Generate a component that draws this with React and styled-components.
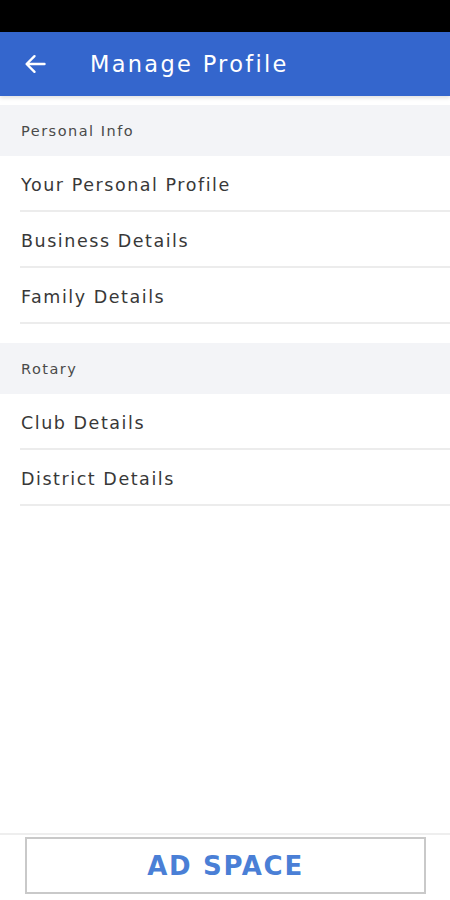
import React from "react";
import styled, { createGlobalStyle } from "styled-components";

const Global = createGlobalStyle`
  html, body { margin: 0; padding: 0; background: #fff; }
  body { font-family: "DejaVu Sans", "Open Sans", sans-serif; }
  * { box-sizing: border-box; }
`;

const Screen = styled.div`
  width: 450px;
  height: 900px;
  display: flex;
  flex-direction: column;
  background: #fff;
  overflow: hidden;
`;

const StatusBar = styled.div`
  height: 32px;
  background: #000;
  flex: none;
`;

const Header = styled.header`
  height: 64px;
  background: #3466cd;
  display: flex;
  align-items: center;
  padding-left: 24px;
  gap: 44px;
  flex: none;
  box-shadow: 0 2px 4px rgba(0, 0, 0, 0.12);
  position: relative;
  z-index: 1;
`;

const Title = styled.h1`
  margin: 0;
  color: #fff;
  font-size: 22.5px;
  font-weight: 500;
  letter-spacing: 2.3px;
`;

const Content = styled.main`
  flex: 1;
  padding-top: 9px;
`;

const Section = styled.section`
  margin-bottom: ${(p) => p.$gap || 0}px;
`;

const SectionTitle = styled.div`
  height: 51px;
  background: #f3f4f7;
  display: flex;
  align-items: center;
  padding-left: 21px;
  font-size: 14.5px;
  letter-spacing: 1.5px;
  color: #4a4a4a;
`;

const Row = styled.div`
  height: 56px;
  margin-left: 20px;
  border-bottom: 2px solid #ececec;
  display: flex;
  align-items: center;
  padding-left: 1px;
  padding-top: 3px;
  font-size: 17.5px;
  letter-spacing: 1.55px;
  color: #383838;
`;

const Footer = styled.footer`
  flex: none;
  border-top: 2px solid #eeeeee;
  padding: 2px 24px 6px 25px;
`;

const AdBox = styled.div`
  height: 57px;
  border: 2px solid #c9c9c9;
  display: flex;
  align-items: center;
  justify-content: center;
  color: #4a7fd6;
  font-size: 26px;
  font-weight: 700;
  letter-spacing: 1.7px;
`;

const BackArrow = () => (
  <svg width="22" height="20" viewBox="0 0 22 20" fill="none">
    <path
      d="M20.5 10H3M10.5 2.2L2.6 10l7.9 7.8"
      stroke="#fff"
      strokeWidth="2.4"
      strokeLinecap="round"
      strokeLinejoin="round"
    />
  </svg>
);

const sections = [
  {
    title: "Personal Info",
    items: ["Your Personal Profile", "Business Details", "Family Details"],
    gap: 19,
  },
  { title: "Rotary", items: ["Club Details", "District Details"], gap: 0 },
];

export default function App() {
  return (
    <Screen>
      <Global />
      <StatusBar />
      <Header>
        <BackArrow />
        <Title>Manage Profile</Title>
      </Header>
      <Content>
        {sections.map((s) => (
          <Section key={s.title} $gap={s.gap}>
            <SectionTitle>{s.title}</SectionTitle>
            {s.items.map((it) => (
              <Row key={it}>{it}</Row>
            ))}
          </Section>
        ))}
      </Content>
      <Footer>
        <AdBox>AD SPACE</AdBox>
      </Footer>
    </Screen>
  );
}
